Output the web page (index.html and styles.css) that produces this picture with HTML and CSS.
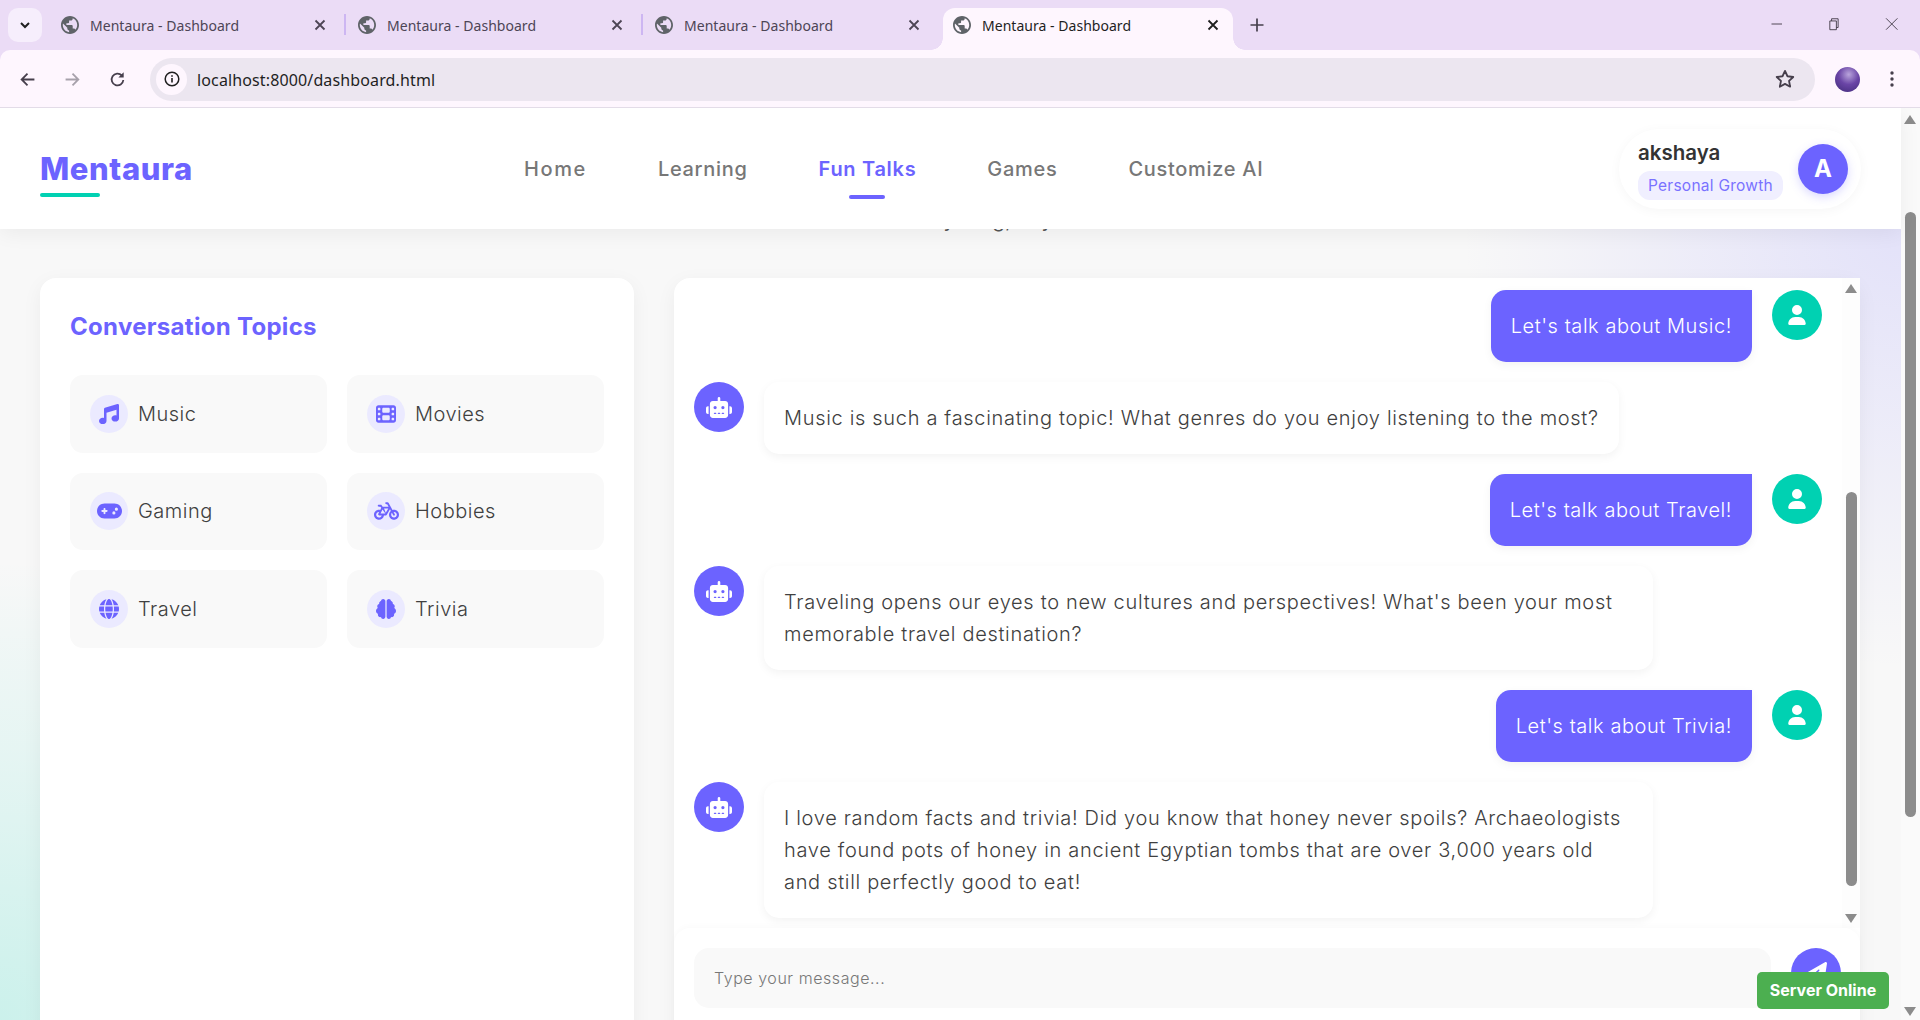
FILE: index.html
```html
<!DOCTYPE html>
<html lang="en">
<head>
    <meta charset="UTF-8">
    <meta name="viewport" content="width=device-width, initial-scale=1.0">
    <title>Mentaura - Dashboard</title>
    <link rel="stylesheet" href="styles.css">
</head>
<body>
    <svg class="icon-defs" xmlns="http://www.w3.org/2000/svg">
        <symbol id="ic-favicon" viewBox="2 2 20 20"><path d="M12 2C6.48 2 2 6.48 2 12s4.48 10 10 10 10-4.48 10-10S17.52 2 12 2zm-1 17.93c-3.95-.49-7-3.85-7-7.93 0-.62.08-1.21.21-1.79L9 15v1c0 1.1.9 2 2 2v1.93zm6.9-2.54c-.26-.81-1-1.39-1.9-1.39h-1v-3c0-.55-.45-1-1-1H8v-2h2c.55 0 1-.45 1-1V7h2c1.1 0 2-.9 2-2v-.41c2.93 1.19 5 4.06 5 7.41 0 2.08-.8 3.97-2.1 5.39z"/></symbol>
        <symbol id="ic-close" viewBox="0 0 16 16"><path d="M3.5 3.5l9 9M12.5 3.5l-9 9" fill="none" stroke="currentColor" stroke-width="1.8"/></symbol>
        <symbol id="ic-music" viewBox="0 0 512 512"><path d="M499.1 6.3c8.1 6 12.9 15.6 12.9 25.7v72V368c0 44.2-43 80-96 80s-96-35.8-96-80s43-80 96-80c11.2 0 22 1.6 32 4.6V147L192 223.8V432c0 44.2-43 80-96 80s-96-35.8-96-80s43-80 96-80c11.2 0 22 1.6 32 4.6V200 128c0-14.1 9.3-26.6 22.8-30.7l320-96c9.7-2.9 20.2-1.1 28.3 5z"/></symbol>
        <symbol id="ic-film" viewBox="0 0 512 512"><path d="M0 96C0 60.7 28.7 32 64 32H448c35.3 0 64 28.7 64 64V416c0 35.3-28.7 64-64 64H64c-35.3 0-64-28.7-64-64V96zM48 368v32c0 8.8 7.2 16 16 16H96c8.8 0 16-7.2 16-16V368c0-8.8-7.2-16-16-16H64c-8.8 0-16 7.2-16 16zm368-16c-8.8 0-16 7.2-16 16v32c0 8.8 7.2 16 16 16h32c8.8 0 16-7.2 16-16V368c0-8.8-7.2-16-16-16H416zM48 240v32c0 8.8 7.2 16 16 16H96c8.8 0 16-7.2 16-16V240c0-8.8-7.2-16-16-16H64c-8.8 0-16 7.2-16 16zm368-16c-8.8 0-16 7.2-16 16v32c0 8.8 7.2 16 16 16h32c8.8 0 16-7.2 16-16V240c0-8.8-7.2-16-16-16H416zM48 112v32c0 8.8 7.2 16 16 16H96c8.8 0 16-7.2 16-16V112c0-8.8-7.2-16-16-16H64c-8.8 0-16 7.2-16 16zM416 96c-8.8 0-16 7.2-16 16v32c0 8.8 7.2 16 16 16h32c8.8 0 16-7.2 16-16V112c0-8.8-7.2-16-16-16H416zM160 128v64c0 17.7 14.3 32 32 32H320c17.7 0 32-14.3 32-32V128c0-17.7-14.3-32-32-32H192c-17.7 0-32 14.3-32 32zm32 160c-17.7 0-32 14.3-32 32v64c0 17.7 14.3 32 32 32H320c17.7 0 32-14.3 32-32V320c0-17.7-14.3-32-32-32H192z"/></symbol>
        <symbol id="ic-gamepad" viewBox="0 0 640 512"><path d="M192 64C86 64 0 150 0 256S86 448 192 448H448c106 0 192-86 192-192s-86-192-192-192H192zM496 168a40 40 0 1 1 0 80 40 40 0 1 1 0-80zM392 304a40 40 0 1 1 80 0 40 40 0 1 1 -80 0zM168 200c0-13.3 10.7-24 24-24s24 10.7 24 24v32h32c13.3 0 24 10.7 24 24s-10.7 24-24 24H216v32c0 13.3-10.7 24-24 24s-24-10.7-24-24V280H136c-13.3 0-24-10.7-24-24s10.7-24 24-24h32V200z"/></symbol>
        <symbol id="ic-bicycle" viewBox="0 0 640 512"><path d="M312 32c-13.3 0-24 10.7-24 24s10.7 24 24 24h25.7l34.6 64H222.9l-27.4-38C191 99.7 183.7 96 176 96H120c-13.3 0-24 10.7-24 24s10.7 24 24 24h43.7l22.1 30.7-26.6 53.1c-10-2.5-20.5-3.8-31.2-3.8C57.3 224 0 281.3 0 352s57.3 128 128 128c65.3 0 119.1-48.9 127-112h49c8.5 0 16.3-4.5 20.7-11.8l84.8-143.5 21.7 40.1C402.4 276.3 384 312 384 352c0 70.7 57.3 128 128 128s128-57.3 128-128s-57.3-128-128-128c-13.5 0-26.5 2.1-38.7 6L375.4 48.8C369.8 38.4 359 32 347.2 32H312zM458.6 303.7l32.3 59.7c6.3 11.7 20.9 16 32.5 9.7s16-20.9 9.7-32.5l-32.3-59.7c3.6-.6 7.4-.9 11.2-.9c39.8 0 72 32.2 72 72s-32.2 72-72 72s-72-32.2-72-72c0-18.6 7-35.5 18.6-48.3zM133.2 368h65c-7.3 32.1-36 56-70.2 56c-39.8 0-72-32.2-72-72s32.2-72 72-72c1.7 0 3.4 .1 5.1 .2l-24.2 48.5c-9 18.1 4.1 39.4 24.3 39.4zm33.7-48l50.7-101.3 72.9 101.2-.1 .1H166.8zm90.6-128H365.9L300 303.5 257.5 192z" fill-rule="evenodd"/></symbol>
        <symbol id="ic-globe" viewBox="0 0 512 512"><path d="M352 256c0 22.2-1.2 43.6-3.3 64H163.3c-2.2-20.4-3.3-41.8-3.3-64s1.2-43.6 3.3-64H348.7c2.2 20.4 3.3 41.8 3.3 64zm28.8-64H503.9c5.3 20.5 8.1 41.9 8.1 64s-2.8 43.5-8.1 64H380.8c2.1-20.6 3.2-42 3.2-64s-1.1-43.4-3.2-64zm112.6-32H376.7c-10-63.9-29.8-117.4-55.3-151.6c78.3 20.7 142 77.5 171.9 151.6zm-149.1 0H167.7c6.1-36.4 15.5-68.6 27-94.7c10.5-23.6 22.2-40.7 33.5-51.5C239.4 3.2 248.7 0 256 0s16.6 3.2 27.8 13.8c11.3 10.8 23 27.9 33.5 51.5c11.6 26 20.9 58.2 27 94.7zm-209 0H18.6C48.6 85.9 112.2 29.1 190.6 8.4C165.1 42.6 145.3 96.1 135.3 160zM8.1 192H131.2c-2.1 20.6-3.2 42-3.2 64s1.1 43.4 3.2 64H8.1C2.8 299.5 0 278.1 0 256s2.8-43.5 8.1-64zM194.7 446.6c-11.6-26-20.9-58.2-27-94.6H344.3c-6.1 36.4-15.5 68.6-27 94.6c-10.5 23.6-22.2 40.7-33.5 51.5C272.6 508.8 263.3 512 256 512s-16.6-3.2-27.8-13.8c-11.3-10.8-23-27.9-33.5-51.5zM135.3 352c10 63.9 29.8 117.4 55.3 151.6C112.2 482.9 48.6 426.1 18.6 352H135.3zm358.1 0c-30 74.1-93.6 130.9-171.9 151.6c25.5-34.2 45.2-87.7 55.3-151.6H493.4z"/></symbol>
        <symbol id="ic-brain" viewBox="0 0 512 512"><path d="M184 0c30.9 0 56 25.1 56 56V456c0 30.9-25.1 56-56 56c-28.9 0-52.7-21.9-55.7-50.1c-5.2 1.4-10.7 2.1-16.3 2.1c-35.3 0-64-28.7-64-64c0-7.4 1.3-14.6 3.6-21.2C21.4 367.4 0 338.2 0 304c0-31.9 18.7-59.5 45.8-72.3C37.1 220.8 32 207 32 192c0-30.7 21.6-56.3 50.4-62.6C80.8 123.9 80 118 80 112c0-29.9 20.6-55.1 48.3-62.1C131.3 21.9 155.1 0 184 0zM328 0c28.9 0 52.6 21.9 55.7 49.9c27.8 7 48.3 32.1 48.3 62.1c0 6-.8 11.9-2.4 17.4c28.8 6.2 50.4 31.9 50.4 62.6c0 15-5.1 28.8-13.8 39.7C493.3 244.5 512 272.1 512 304c0 34.2-21.4 63.4-51.6 74.8c2.3 6.6 3.6 13.8 3.6 21.2c0 35.3-28.7 64-64 64c-5.6 0-11.1-.7-16.3-2.1c-3 28.2-26.8 50.1-55.7 50.1c-30.9 0-56-25.1-56-56V56c0-30.9 25.1-56 56-56z"/></symbol>
        <symbol id="ic-robot" viewBox="0 0 640 512"><path d="M320 0c17.7 0 32 14.3 32 32V96H472c39.8 0 72 32.2 72 72V440c0 39.8-32.2 72-72 72H168c-39.8 0-72-32.2-72-72V168c0-39.8 32.2-72 72-72H288V32c0-17.7 14.3-32 32-32zM208 384c-8.8 0-16 7.2-16 16s7.2 16 16 16h32c8.8 0 16-7.2 16-16s-7.2-16-16-16H208zm96 0c-8.8 0-16 7.2-16 16s7.2 16 16 16h32c8.8 0 16-7.2 16-16s-7.2-16-16-16H304zm96 0c-8.8 0-16 7.2-16 16s7.2 16 16 16h32c8.8 0 16-7.2 16-16s-7.2-16-16-16H400zM264 256a40 40 0 1 0 -80 0 40 40 0 1 0 80 0zm152 40a40 40 0 1 0 0-80 40 40 0 1 0 0 80zM48 224H64V416H48c-26.5 0-48-21.5-48-48V272c0-26.5 21.5-48 48-48zm544 0c26.5 0 48 21.5 48 48v96c0 26.5-21.5 48-48 48H576V224h16z"/></symbol>
        <symbol id="ic-user" viewBox="0 0 448 512"><path d="M224 256A128 128 0 1 0 224 0a128 128 0 1 0 0 256zm-45.7 48C79.8 304 0 383.8 0 482.3C0 498.7 13.3 512 29.7 512H418.3c16.4 0 29.7-13.3 29.7-29.7C448 383.8 368.2 304 269.7 304H178.3z"/></symbol>
        <symbol id="ic-plane" viewBox="0 0 512 512"><path d="M498.1 5.6c10.1 7 15.4 19.1 13.5 31.2l-64 416c-1.5 9.7-7.4 18.2-16 23s-18.9 5.4-28 1.6L284 427.7l-68.5 74.1c-8.9 9.7-22.9 12.9-35.2 8.1S160 493.2 160 480V396.4c0-4 1.5-7.8 4.2-10.7L331.8 202.8c5.8-6.3 5.6-16-.4-22s-15.7-6.4-22-.7L106 360.8 17.7 316.6C7.1 311.3 .3 300.7 0 288.9s5.9-22.8 16.1-28.7l448-256c10.7-6.1 23.9-5.5 34 1.4z"/></symbol>
    </svg>

    <div class="tab-strip">
        <button class="tab-search">
            <svg viewBox="0 0 12 12" width="12" height="12"><path d="M2 4l4 4 4-4" fill="none" stroke="#1f1f1f" stroke-width="2"/></svg>
        </button>
        <div class="tab">
            <svg class="favicon"><use href="#ic-favicon"/></svg>
            <span class="tab-title">Mentaura - Dashboard</span>
            <svg class="tab-close"><use href="#ic-close"/></svg>
        </div>
        <div class="tab">
            <svg class="favicon"><use href="#ic-favicon"/></svg>
            <span class="tab-title">Mentaura - Dashboard</span>
            <svg class="tab-close"><use href="#ic-close"/></svg>
        </div>
        <div class="tab tab-last">
            <svg class="favicon"><use href="#ic-favicon"/></svg>
            <span class="tab-title">Mentaura - Dashboard</span>
            <svg class="tab-close"><use href="#ic-close"/></svg>
        </div>
        <div class="tab tab-active">
            <svg class="favicon"><use href="#ic-favicon"/></svg>
            <span class="tab-title">Mentaura - Dashboard</span>
            <svg class="tab-close"><use href="#ic-close"/></svg>
        </div>
        <svg class="new-tab" viewBox="0 0 16 16"><path d="M8 1.5v13M1.5 8h13" fill="none" stroke="#463f4c" stroke-width="1.7"/></svg>
        <div class="window-controls">
            <svg viewBox="0 0 16 16"><path d="M2 8h12" stroke="#3b3540" stroke-width="1"/></svg>
            <svg viewBox="0 0 16 16"><path d="M3.5 4.5h7.5v10h-7.5zM5.5 4.5v-2.5h7.5v10h-2" fill="none" stroke="#3b3540" stroke-width="1"/></svg>
            <svg viewBox="0 0 16 16"><path d="M1.5 1.5l13 13M14.5 1.5l-13 13" stroke="#3b3540" stroke-width="1"/></svg>
        </div>
    </div>

    <div class="toolbar">
        <button class="tool-btn">
            <svg viewBox="0 0 16 16"><path d="M14.5 8H2.5M8 2.5L2.5 8 8 13.5" fill="none" stroke="#463f4c" stroke-width="1.7"/></svg>
        </button>
        <button class="tool-btn">
            <svg viewBox="0 0 16 16"><path d="M1.5 8h12M8 2.5L13.5 8 8 13.5" fill="none" stroke="#a7a1ab" stroke-width="1.7"/></svg>
        </button>
        <button class="tool-btn">
            <svg viewBox="0 0 16 16"><path d="M13.5 8.5A5.5 5.5 0 1 1 12 4.2" fill="none" stroke="#463f4c" stroke-width="1.7"/><path d="M13.8 1.2v5h-5z" fill="#463f4c"/></svg>
        </button>
        <div class="omnibox">
            <span class="site-info">
                <svg viewBox="0 0 16 16" width="16" height="16"><circle cx="8" cy="8" r="6.8" fill="none" stroke="#1f1f1f" stroke-width="1.5"/><path d="M8 7v4.6M8 4.2v1.6" stroke="#1f1f1f" stroke-width="1.6"/></svg>
            </span>
            <span class="url">localhost:8000/dashboard.html</span>
            <svg class="star" viewBox="0 0 24 24"><path d="M12 3.2l2.7 5.8 6.3.8-4.6 4.3 1.2 6.3-5.6-3.1-5.6 3.1 1.2-6.3L3 9.8l6.3-.8z" fill="none" stroke="#463f4c" stroke-width="2" stroke-linejoin="round"/></svg>
        </div>
        <span class="profile-pic"></span>
        <svg class="chrome-menu" viewBox="0 0 4 18"><circle cx="2" cy="3" r="1.7"/><circle cx="2" cy="9" r="1.7"/><circle cx="2" cy="15" r="1.7"/></svg>
    </div>

    <div class="viewport">
        <div class="page">
            <header class="site-header">
                <div class="logo">Mentaura</div>
                <nav class="main-nav">
                    <a href="#">Home</a>
                    <a href="#">Learning</a>
                    <a href="#" class="active">Fun Talks</a>
                    <a href="#">Games</a>
                    <a href="#">Customize AI</a>
                </nav>
                <div class="user-pill">
                    <div class="user-info">
                        <div class="user-name">akshaya</div>
                        <div class="user-badge">Personal Growth</div>
                    </div>
                    <div class="user-avatar">A</div>
                </div>
            </header>

            <p class="page-subtitle">Chat about anything, anytime</p>

            <main class="fun-talks">
                <section class="topics-card">
                    <h2>Conversation Topics</h2>
                    <div class="topics-grid">
                        <div class="topic"><span class="topic-icon"><svg><use href="#ic-music"/></svg></span>Music</div>
                        <div class="topic"><span class="topic-icon"><svg><use href="#ic-film"/></svg></span>Movies</div>
                        <div class="topic"><span class="topic-icon"><svg class="wide"><use href="#ic-gamepad"/></svg></span>Gaming</div>
                        <div class="topic"><span class="topic-icon"><svg class="wide"><use href="#ic-bicycle"/></svg></span>Hobbies</div>
                        <div class="topic"><span class="topic-icon"><svg><use href="#ic-globe"/></svg></span>Travel</div>
                        <div class="topic"><span class="topic-icon"><svg><use href="#ic-brain"/></svg></span>Trivia</div>
                    </div>
                </section>

                <section class="chat-card">
                    <div class="chat-messages">
                        <div class="message user">
                            <span class="avatar"><svg class="ic-user"><use href="#ic-user"/></svg></span>
                            <div class="bubble">Let's talk about Music!</div>
                        </div>
                        <div class="message bot">
                            <span class="avatar"><svg class="ic-robot"><use href="#ic-robot"/></svg></span>
                            <div class="bubble">Music is such a fascinating topic! What genres do you enjoy listening to the most?</div>
                        </div>
                        <div class="message user">
                            <span class="avatar"><svg class="ic-user"><use href="#ic-user"/></svg></span>
                            <div class="bubble">Let's talk about Travel!</div>
                        </div>
                        <div class="message bot">
                            <span class="avatar"><svg class="ic-robot"><use href="#ic-robot"/></svg></span>
                            <div class="bubble">Traveling opens our eyes to new cultures and perspectives! What's been your most memorable travel destination?</div>
                        </div>
                        <div class="message user">
                            <span class="avatar"><svg class="ic-user"><use href="#ic-user"/></svg></span>
                            <div class="bubble">Let's talk about Trivia!</div>
                        </div>
                        <div class="message bot">
                            <span class="avatar"><svg class="ic-robot"><use href="#ic-robot"/></svg></span>
                            <div class="bubble">I love random facts and trivia! Did you know that honey never spoils? Archaeologists have found pots of honey in ancient Egyptian tombs that are over 3,000 years old and still perfectly good to eat!</div>
                        </div>
                        <div class="chat-scrollbar">
                            <span class="arrow-up"></span>
                            <span class="thumb"></span>
                            <span class="arrow-down"></span>
                        </div>
                    </div>
                    <div class="chat-input">
                        <input type="text" placeholder="Type your message...">
                        <button class="send-btn"><svg><use href="#ic-plane"/></svg></button>
                    </div>
                </section>
            </main>
        </div>

        <div class="page-scrollbar">
            <span class="arrow-up"></span>
            <span class="thumb"></span>
            <span class="arrow-down"></span>
        </div>

        <div class="server-status">Server Online</div>
    </div>
</body>
</html>
```

FILE: styles.css
```css
* {
    box-sizing: border-box;
}

body {
    margin: 0;
    height: 100vh;
    overflow: hidden;
    display: flex;
    flex-direction: column;
    font-family: Inter, "Liberation Sans", sans-serif;
    color: #444;
    background-color: #ebdcf6;
}

button {
    border: none;
    background: none;
    padding: 0;
}

.icon-defs {
    display: none;
}

/* browser chrome */
.tab-strip {
    height: 50px;
    flex-shrink: 0;
    display: flex;
    align-items: flex-end;
    padding-left: 8px;
    background-color: #ebdcf6;
    font-family: "Noto Sans", sans-serif;
}

.tab-search {
    width: 34px;
    height: 34px;
    margin: 0 5px 8px 0;
    border-radius: 10px;
    background-color: #f6eefc;
    display: flex;
    align-items: center;
    justify-content: center;
}

.tab {
    width: 297px;
    height: 42px;
    padding: 0 16px 8px 14px;
    display: flex;
    align-items: center;
    position: relative;
    color: #4d4555;
}

.tab::after {
    content: "";
    position: absolute;
    right: -2px;
    top: 6px;
    width: 2px;
    height: 21px;
    background-color: #cdb6f2;
}

.tab-last::after {
    display: none;
}

.tab-active {
    width: 290px;
    margin-left: 5px;
    padding-left: 10px;
    padding-right: 12px;
    border-radius: 12px 12px 0 0;
    background-color: #fef6fe;
    color: #1f1f1f;
}

.tab-active::before,
.tab-active::after {
    content: "";
    display: block;
    position: absolute;
    top: auto;
    bottom: 0;
    width: 12px;
    height: 12px;
}

.tab-active::before {
    left: -12px;
    background: radial-gradient(circle at 0 0, #ebdcf6 11.5px, #fef6fe 12px);
}

.tab-active::after {
    right: -12px;
    background: radial-gradient(circle at 100% 0, #ebdcf6 11.5px, #fef6fe 12px);
}

.favicon {
    width: 18px;
    height: 18px;
    margin-right: 11px;
    fill: #5f6368;
    flex-shrink: 0;
}

.tab-title {
    flex: 1;
    padding-top: 1px;
    font-size: 14px;
    letter-spacing: 0.03px;
    white-space: nowrap;
}

.tab-close {
    width: 16px;
    height: 16px;
}

.new-tab {
    width: 16px;
    height: 16px;
    margin: 0 0 17px 16px;
}

.window-controls {
    margin-left: auto;
    align-self: flex-start;
    display: flex;
}

.window-controls svg {
    width: 57.5px;
    height: 14px;
    margin-top: 17px;
}

.toolbar {
    height: 58px;
    flex-shrink: 0;
    display: flex;
    align-items: center;
    padding: 1px 0 0 10px;
    border-radius: 10px 10px 0 0;
    border-bottom: 1px solid #e3dce8;
    background-color: #fef6fe;
}

.tool-btn {
    width: 34px;
    height: 34px;
    margin-right: 11px;
    display: flex;
    align-items: center;
    justify-content: center;
}

.tool-btn svg {
    width: 17px;
    height: 17px;
}

.omnibox {
    width: 1665px;
    height: 43px;
    margin-left: 5px;
    padding: 0 19px 0 6px;
    display: flex;
    align-items: center;
    border-radius: 22px;
    background-color: #ece6f0;
}

.site-info {
    width: 31px;
    height: 31px;
    margin-right: 10px;
    border-radius: 50%;
    background-color: #fef6fe;
    display: flex;
    align-items: center;
    justify-content: center;
}

.url {
    flex: 1;
    padding-top: 1px;
    font-family: "Noto Sans", sans-serif;
    font-size: 16px;
    letter-spacing: 0.13px;
    color: #1f1f1f;
}

.star {
    width: 22px;
    height: 22px;
}

.profile-pic {
    width: 25px;
    height: 25px;
    margin-left: 20px;
    border-radius: 50%;
    background: radial-gradient(circle at 55% 30%, #b9a4dc 0, #6a45a6 45%, #3f2a78 100%);
}

.chrome-menu {
    width: 4px;
    height: 18px;
    margin-left: 30px;
    fill: #463f4c;
}

/* page */
.viewport {
    flex: 1;
    min-height: 0;
    display: flex;
    position: relative;
    overflow: hidden;
    background-color: #f8f8f8;
}

.page {
    flex: 1;
    min-width: 0;
    background:
        radial-gradient(circle 440px at 100% 121px, rgba(108, 99, 255, 0.15), transparent),
        radial-gradient(circle 460px at 0 100%, rgba(0, 209, 178, 0.18), transparent);
}

.site-header {
    height: 121px;
    padding: 0 40px;
    display: flex;
    align-items: center;
    position: relative;
    z-index: 2;
    background-color: #fff;
    box-shadow: 0 4px 20px rgba(0, 0, 0, 0.06);
}

.logo {
    width: 151px;
    position: relative;
    font-size: 31px;
    line-height: 35px;
    font-weight: 800;
    letter-spacing: 0.6px;
    white-space: nowrap;
    color: #6c63ff;
}

.logo::after {
    content: "";
    position: absolute;
    left: 0;
    bottom: -11px;
    width: 60px;
    height: 4px;
    border-radius: 2px;
    background-color: #00d1b2;
}

.main-nav {
    display: flex;
    margin-left: 333px;
    padding-top: 1px;
    gap: 71px;
}

.main-nav a {
    position: relative;
    font-size: 20px;
    font-weight: 500;
    letter-spacing: 0.7px;
    text-decoration: none;
    color: #777;
}

.main-nav a:first-child {
    letter-spacing: 1.6px;
}

.main-nav a.active {
    color: #6c63ff;
    font-weight: 600;
}

.main-nav a.active::after {
    content: "";
    position: absolute;
    left: 50%;
    top: 38px;
    width: 36px;
    height: 4px;
    margin-left: -18px;
    border-radius: 2px;
    background-color: #6c63ff;
}

.user-pill {
    margin-left: auto;
    width: 242px;
    height: 80px;
    padding: 0 13px 0 19px;
    display: flex;
    align-items: center;
    justify-content: space-between;
    border-radius: 40px;
    background-color: #fff;
    box-shadow: 0 2px 12px rgba(0, 0, 0, 0.04);
}

.user-info {
    padding-top: 3px;
}

.user-name {
    font-size: 20.5px;
    font-weight: 600;
    color: #333;
}

.user-badge {
    margin-top: 6px;
    padding: 5px 10px;
    border-radius: 12px;
    font-size: 15.5px;
    line-height: 19px;
    letter-spacing: 0.25px;
    color: #7a72ff;
    background-color: #f0efff;
}

.user-avatar {
    width: 50px;
    height: 50px;
    display: flex;
    align-items: center;
    justify-content: center;
    border-radius: 50%;
    font-size: 24px;
    font-weight: 700;
    color: #fff;
    background-color: #6c63ff;
    box-shadow: 0 3px 10px rgba(108, 99, 255, 0.25);
}

.page-subtitle {
    height: 71px;
    margin: -22px 0 0;
    font-size: 20px;
    line-height: 26px;
    letter-spacing: 0.5px;
    text-align: center;
    color: #555;
}

.fun-talks {
    display: grid;
    grid-template-columns: 594px 1186px;
    gap: 40px;
    padding: 0 41px 0 40px;
}

.topics-card {
    height: 800px;
    padding: 30px;
    border-radius: 16px;
    background-color: #fff;
    box-shadow: 0 5px 20px rgba(0, 0, 0, 0.05);
}

.topics-card h2 {
    margin: 0 0 29px;
    font-size: 24px;
    line-height: 38px;
    font-weight: 700;
    letter-spacing: 0.3px;
    color: #6c63ff;
}

.topics-grid {
    display: grid;
    grid-template-columns: 257px 257px;
    grid-auto-rows: 77.6px;
    gap: 20px;
}

.topic {
    padding: 0 20px;
    display: flex;
    align-items: center;
    gap: 10px;
    border-radius: 13px;
    background-color: #f9f9f9;
    font-size: 20px;
    font-weight: 350;
    letter-spacing: 0.5px;
    color: #404040;
}

.topic-icon {
    width: 38px;
    height: 38px;
    display: flex;
    align-items: center;
    justify-content: center;
    border-radius: 50%;
    background-color: #ebeaff;
}

.topic-icon svg {
    width: 20px;
    height: 20px;
    fill: #6c63ff;
}

.topic-icon svg.wide {
    width: 25px;
}

.chat-card {
    height: 800px;
    border-radius: 16px;
    background-color: #fff;
    box-shadow: 0 5px 20px rgba(0, 0, 0, 0.05);
}

.chat-messages {
    height: 650px;
    padding: 12px 38px 0 20px;
    position: relative;
    display: flex;
    flex-direction: column;
    gap: 20px;
    overflow: hidden;
}

.message {
    display: flex;
    gap: 20px;
    align-items: flex-start;
}

.message.user {
    flex-direction: row-reverse;
}

.avatar {
    width: 50px;
    height: 50px;
    flex-shrink: 0;
    display: flex;
    align-items: center;
    justify-content: center;
    border-radius: 50%;
}

.bot .avatar {
    background-color: #6c63ff;
}

.user .avatar {
    background-color: #00d1b2;
}

.avatar svg {
    fill: #fff;
}

.ic-robot {
    width: 26px;
    height: 21px;
}

.ic-user {
    width: 18px;
    height: 20px;
}

.bubble {
    max-width: 889px;
    padding: 20px;
    font-size: 20px;
    font-weight: 350;
    line-height: 32px;
    letter-spacing: 0.68px;
    box-shadow: 0 3px 10px rgba(0, 0, 0, 0.05);
}

.bot .bubble {
    border-radius: 15px;
    background-color: #fff;
    color: #404040;
}

.user .bubble {
    border-radius: 15px 0 15px 15px;
    letter-spacing: 0.56px;
    background-color: #6c63ff;
    color: #fff;
}

/* fake scrollbars */
.chat-scrollbar {
    position: absolute;
    top: 0;
    right: 0;
    bottom: 0;
    width: 18px;
    background-color: #fdfdfd;
}

.chat-scrollbar .thumb {
    position: absolute;
    left: 4px;
    top: 214px;
    width: 11px;
    height: 394px;
    border-radius: 6px;
    background-color: #8c8c8c;
}

.chat-scrollbar .arrow-up {
    position: absolute;
    top: 6px;
    left: 3px;
}

.chat-scrollbar .arrow-down {
    position: absolute;
    bottom: 5px;
    left: 3px;
}

.arrow-up {
    width: 0;
    height: 0;
    border-left: 6.5px solid transparent;
    border-right: 6.5px solid transparent;
    border-bottom: 9px solid #8c8c8c;
}

.arrow-down {
    width: 0;
    height: 0;
    border-left: 6.5px solid transparent;
    border-right: 6.5px solid transparent;
    border-top: 9px solid #8c8c8c;
}

.page-scrollbar {
    width: 19px;
    position: relative;
    background-color: #fafafa;
}

.page-scrollbar .thumb {
    position: absolute;
    left: 4px;
    top: 104px;
    width: 11px;
    height: 605px;
    border-radius: 6px;
    background-color: #8c8c8c;
}

.page-scrollbar .arrow-up {
    position: absolute;
    top: 7px;
    left: 3px;
}

.page-scrollbar .arrow-down {
    position: absolute;
    bottom: 4px;
    left: 3px;
}

.chat-input {
    height: 150px;
    padding: 20px 19px 20px 20px;
    display: flex;
    gap: 20px;
    align-items: flex-start;
    border-radius: 16px 16px 0 0;
    background-color: #fff;
    box-shadow: 0 -2px 6px rgba(0, 0, 0, 0.02);
    position: relative;
}

.chat-input input {
    flex: 1;
    height: 60px;
    padding: 0 20px;
    border: none;
    border-radius: 15px;
    background-color: #f9f9f9;
    font-family: Inter, sans-serif;
    font-size: 16px;
    font-weight: 350;
    letter-spacing: 0.55px;
}

.chat-input input::placeholder {
    color: #777;
}

.send-btn {
    width: 50px;
    height: 50px;
    display: flex;
    align-items: center;
    justify-content: center;
    border-radius: 50%;
    background-color: #6c63ff;
}

.send-btn svg {
    width: 22px;
    height: 22px;
    fill: #fff;
}

.server-status {
    position: absolute;
    right: 31px;
    bottom: 11px;
    width: 132px;
    height: 37px;
    padding-bottom: 2px;
    display: flex;
    align-items: center;
    justify-content: center;
    border-radius: 5px;
    font-size: 16px;
    font-weight: 700;
    color: #fff;
    background-color: #4caf50;
}
```
